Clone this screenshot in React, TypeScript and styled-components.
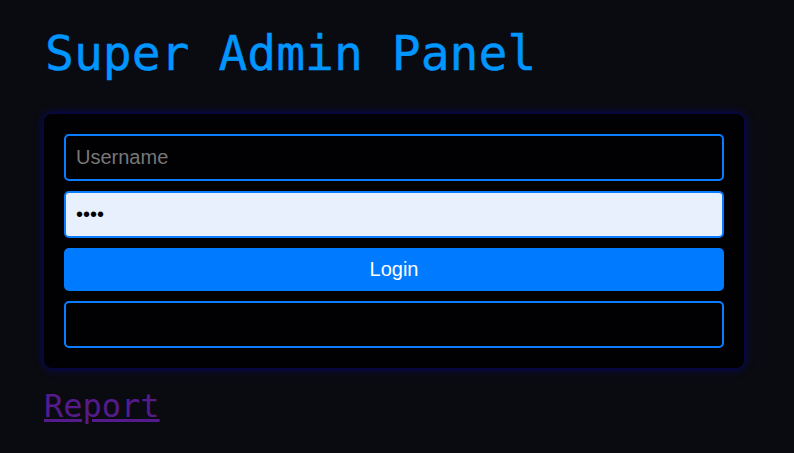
import React from "react";
import styled, { createGlobalStyle } from "styled-components";

const Global = createGlobalStyle`
  html, body { margin: 0; padding: 0; background: #0a0b10; }
  body { font-family: "DejaVu Sans Mono", "Liberation Mono", monospace; }
`;

const Page = styled.div`
  padding: 20px 50px 0 44px;
  display: flex;
  flex-direction: column;
  align-items: stretch;
  width: 700px;
`;

const Title = styled.h1`
  margin: 0 0 0 1px;
  font-family: "DejaVu Sans Mono", "Liberation Mono", monospace;
  font-weight: normal;
  font-size: 48px;
  line-height: 64px;
  color: #0096ff;
  height: 94px;
  padding-top: 1px;
  box-sizing: border-box;
  -webkit-text-stroke: 0.4px #0096ff;
`;

const Panel = styled.form`
  background: #010104;
  border-radius: 8px;
  box-shadow: 0 0 10px rgba(0, 0, 220, 0.55);
  padding: 20px;
  display: flex;
  flex-direction: column;
  gap: 10px;
`;

const Field = styled.input<{ $filled?: boolean }>`
  box-sizing: border-box;
  height: 47px;
  width: 100%;
  border: 2px solid #0a7cff;
  border-radius: 5px;
  background: ${(p) => (p.$filled ? "#e8f0fe" : "#010104")};
  color: ${(p) => (p.$filled ? "#000" : "#ccc")};
  font-family: "Liberation Sans", Arial, sans-serif;
  font-size: 20px;
  padding: 0 10px;
  outline: none;
  &::placeholder { color: #777; }
`;

const Button = styled.button`
  height: 43px;
  border: none;
  border-radius: 5px;
  background: #007bff;
  color: #fff;
  font-family: "Liberation Sans", Arial, sans-serif;
  font-size: 20px;
  cursor: pointer;
`;

const ReportLink = styled.a`
  margin-top: 18px;
  font-family: "DejaVu Sans Mono", "Liberation Mono", monospace;
  font-size: 32px;
  line-height: 40px;
  color: #551a8b;
  text-decoration: underline;
  align-self: flex-start;
`;

export default function App() {
  return (
    <>
      <Global />
      <Page>
        <Title>Super Admin Panel</Title>
        <Panel onSubmit={(e) => e.preventDefault()}>
          <Field placeholder="Username" />
          <Field type="password" defaultValue="1234" $filled />
          <Button type="submit">Login</Button>
          <Field readOnly />
        </Panel>
        <ReportLink href="#report">Report</ReportLink>
      </Page>
    </>
  );
}
